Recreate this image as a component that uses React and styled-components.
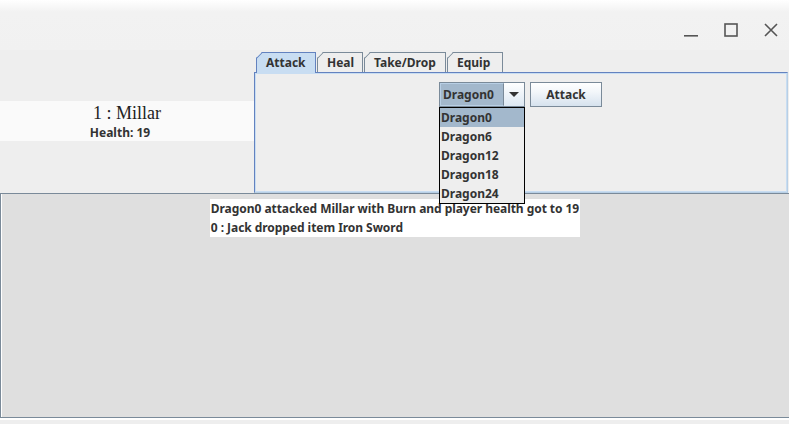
import React from "react";
import styled, { createGlobalStyle } from "styled-components";

const GlobalStyle = createGlobalStyle`
  html, body {
    margin: 0;
    padding: 0;
    background: #eeeeee;
  }
`;

const Window = styled.div`
  width: 789px;
  height: 424px;
  display: flex;
  flex-direction: column;
  overflow: hidden;
  font-family: "Noto Sans", "DejaVu Sans", sans-serif;
`;

const TitleBar = styled.div`
  height: 50px;
  flex: none;
  display: flex;
  justify-content: flex-end;
  align-items: center;
  gap: 26px;
  padding: 10px 11px 0 0;
  box-sizing: border-box;
  background: linear-gradient(#ffffff 0px, #f2f2f2 12px, #f1f1f1 100%);
`;

const WinButton = styled.div`
  width: 14px;
  height: 14px;
  display: flex;
  align-items: center;
  justify-content: center;
`;

const Top = styled.div`
  height: 143px;
  flex: none;
  display: flex;
  background: #eeeeee;
`;

const PlayerPanel = styled.div`
  width: 254px;
  flex: none;
  padding-top: 51px;
  box-sizing: border-box;
`;

const PlayerStrip = styled.div`
  height: 40px;
  background: #fafafa;
  display: flex;
  flex-direction: column;
  align-items: center;
`;

const PlayerName = styled.div`
  font-family: "Liberation Serif", serif;
  font-size: 18px;
  line-height: 21px;
  margin-top: 2px;
  color: #222;
`;

const PlayerHealth = styled.div`
  font-size: 12px;
  font-weight: bold;
  line-height: 15px;
  color: #333;
  margin-left: -14px;
  margin-top: 1px;
`;

const TabPane = styled.div`
  flex: 1;
  display: flex;
  flex-direction: column;
  padding-top: 2px;
`;

const TabRow = styled.div`
  display: flex;
  height: 20px;
  padding-left: 2px;
`;

const Tab = styled.div`
  position: relative;
  box-sizing: border-box;
  height: ${(p) => (p.$active ? "21px" : "20px")};
  width: ${(p) => p.$w}px;
  margin-right: 1px;
  padding-left: ${(p) => (p.$active ? 9 : 9)}px;
  font-size: 12px;
  font-weight: bold;
  line-height: 19px;
  color: #333;
  background: ${(p) => (p.$active ? "#c8ddf2" : "#eeeeee")};
  border: 1px solid ${(p) => (p.$active ? "#6382bf" : "#7a8a99")};
  border-bottom: none;
  clip-path: polygon(6px 0, 100% 0, 100% 100%, 0 100%, 0 6px);
  z-index: ${(p) => (p.$active ? 2 : 1)};

  &::before {
    content: "";
    position: absolute;
    left: -1px;
    top: -1px;
    width: 9px;
    height: 1px;
    background: ${(p) => (p.$active ? "#6382bf" : "#7a8a99")};
    transform-origin: 0 0;
    transform: translate(0, 6px) rotate(-45deg);
  }
`;

const TabBody = styled.div`
  flex: 1;
  position: relative;
  border: 1px solid #6382bf;
  border-right-color: #b8cfe5;
  border-bottom-color: #b8cfe5;
  box-shadow: inset 1px 1px 0 #c8ddf2, inset -1px -1px 0 #c8ddf2;
  margin-right: 1px;
  display: flex;
  justify-content: flex-start;
  align-items: flex-start;
  gap: 5px;
  padding: 9px 0 0 184px;
`;

const Combo = styled.div`
  position: relative;
  display: flex;
  width: 86px;
  height: 25px;
  box-sizing: border-box;
  border: 1px solid #7a8a99;
  background: #a3b8cc;
`;

const ComboText = styled.div`
  flex: 1;
  font-size: 12px;
  font-weight: bold;
  line-height: 22px;
  padding-left: 2px;
  color: #333;
  border: 1px solid #b8cfe5;
  border-right: 1px solid #7a8a99;
`;

const ComboArrow = styled.div`
  width: 20px;
  display: flex;
  align-items: center;
  justify-content: center;
  background: linear-gradient(#ffffff, #dde8f3);
`;

const ComboList = styled.div`
  position: absolute;
  left: -1px;
  top: 24px;
  width: 86px;
  box-sizing: border-box;
  border: 1px solid #000;
  background: #eeeeee;
  z-index: 10;
`;

const ComboItem = styled.div`
  height: 19px;
  font-size: 12px;
  font-weight: bold;
  line-height: 19px;
  padding-left: 1px;
  color: #333;
  background: ${(p) => (p.$selected ? "#a3b8cc" : "transparent")};
`;

const ActionButton = styled.div`
  width: 72px;
  height: 25px;
  box-sizing: border-box;
  border: 1px solid #7a8a99;
  background: linear-gradient(#ffffff 0%, #f2f6fa 40%, #d6e2ee 100%);
  font-size: 12px;
  font-weight: bold;
  line-height: 23px;
  text-align: center;
  color: #333;
`;

const LogArea = styled.div`
  flex: 1;
  display: flex;
  justify-content: center;
  align-items: flex-start;
  margin-bottom: 6px;
  padding-top: 5px;
  background: #dfdfdf;
  border-top: 1px solid #7a8a99;
  border-left: 1px solid #7a8a99;
  border-bottom: 1px solid #7a8a99;
  box-shadow: inset 1px 0 0 #ffffff, 0 2px 0 #ffffff;
`;

const LogBox = styled.div`
  background: #ffffff;
  padding: 0 1px 0 1px;
  margin-left: 0;
  letter-spacing: -0.05px;
`;

const LogLine = styled.div`
  font-size: 12px;
  font-weight: bold;
  line-height: 19px;
  color: #333;
`;

const dragons = ["Dragon0", "Dragon6", "Dragon12", "Dragon18", "Dragon24"];
const tabs = [
  { name: "Attack", w: 60 },
  { name: "Heal", w: 46 },
  { name: "Take/Drop", w: 82 },
  { name: "Equip", w: 56 },
];
const log = [
  "Dragon0 attacked Millar with Burn and player health got to 19",
  "0 : Jack dropped item Iron Sword",
];

export default function App() {
  return (
    <>
      <GlobalStyle />
      <Window>
        <TitleBar>
          <WinButton>
            <svg width="14" height="14" viewBox="0 0 14 14">
              <rect x="0" y="12" width="14" height="1.6" fill="#555" />
            </svg>
          </WinButton>
          <WinButton>
            <svg width="14" height="14" viewBox="0 0 14 14">
              <rect x="1" y="1" width="12" height="12" fill="none" stroke="#555" strokeWidth="1.6" />
            </svg>
          </WinButton>
          <WinButton>
            <svg width="14" height="14" viewBox="0 0 14 14">
              <path d="M1 1 L13 13 M13 1 L1 13" stroke="#555" strokeWidth="1.6" />
            </svg>
          </WinButton>
        </TitleBar>
        <Top>
          <PlayerPanel>
            <PlayerStrip>
              <PlayerName>1 : Millar</PlayerName>
              <PlayerHealth>Health: 19</PlayerHealth>
            </PlayerStrip>
          </PlayerPanel>
          <TabPane>
            <TabRow>
              {tabs.map((t, i) => (
                <Tab key={t.name} $w={t.w} $active={i === 0}>
                  {t.name}
                </Tab>
              ))}
            </TabRow>
            <TabBody>
              <Combo>
                <ComboText>Dragon0</ComboText>
                <ComboArrow>
                  <svg width="10" height="6" viewBox="0 0 10 6">
                    <path d="M0 0 H10 L5 5 Z" fill="#333" />
                  </svg>
                </ComboArrow>
                <ComboList>
                  {dragons.map((d, i) => (
                    <ComboItem key={d} $selected={i === 0}>
                      {d}
                    </ComboItem>
                  ))}
                </ComboList>
              </Combo>
              <ActionButton>Attack</ActionButton>
            </TabBody>
          </TabPane>
        </Top>
        <LogArea>
          <LogBox>
            {log.map((l) => (
              <LogLine key={l}>{l}</LogLine>
            ))}
          </LogBox>
        </LogArea>
      </Window>
    </>
  );
}
